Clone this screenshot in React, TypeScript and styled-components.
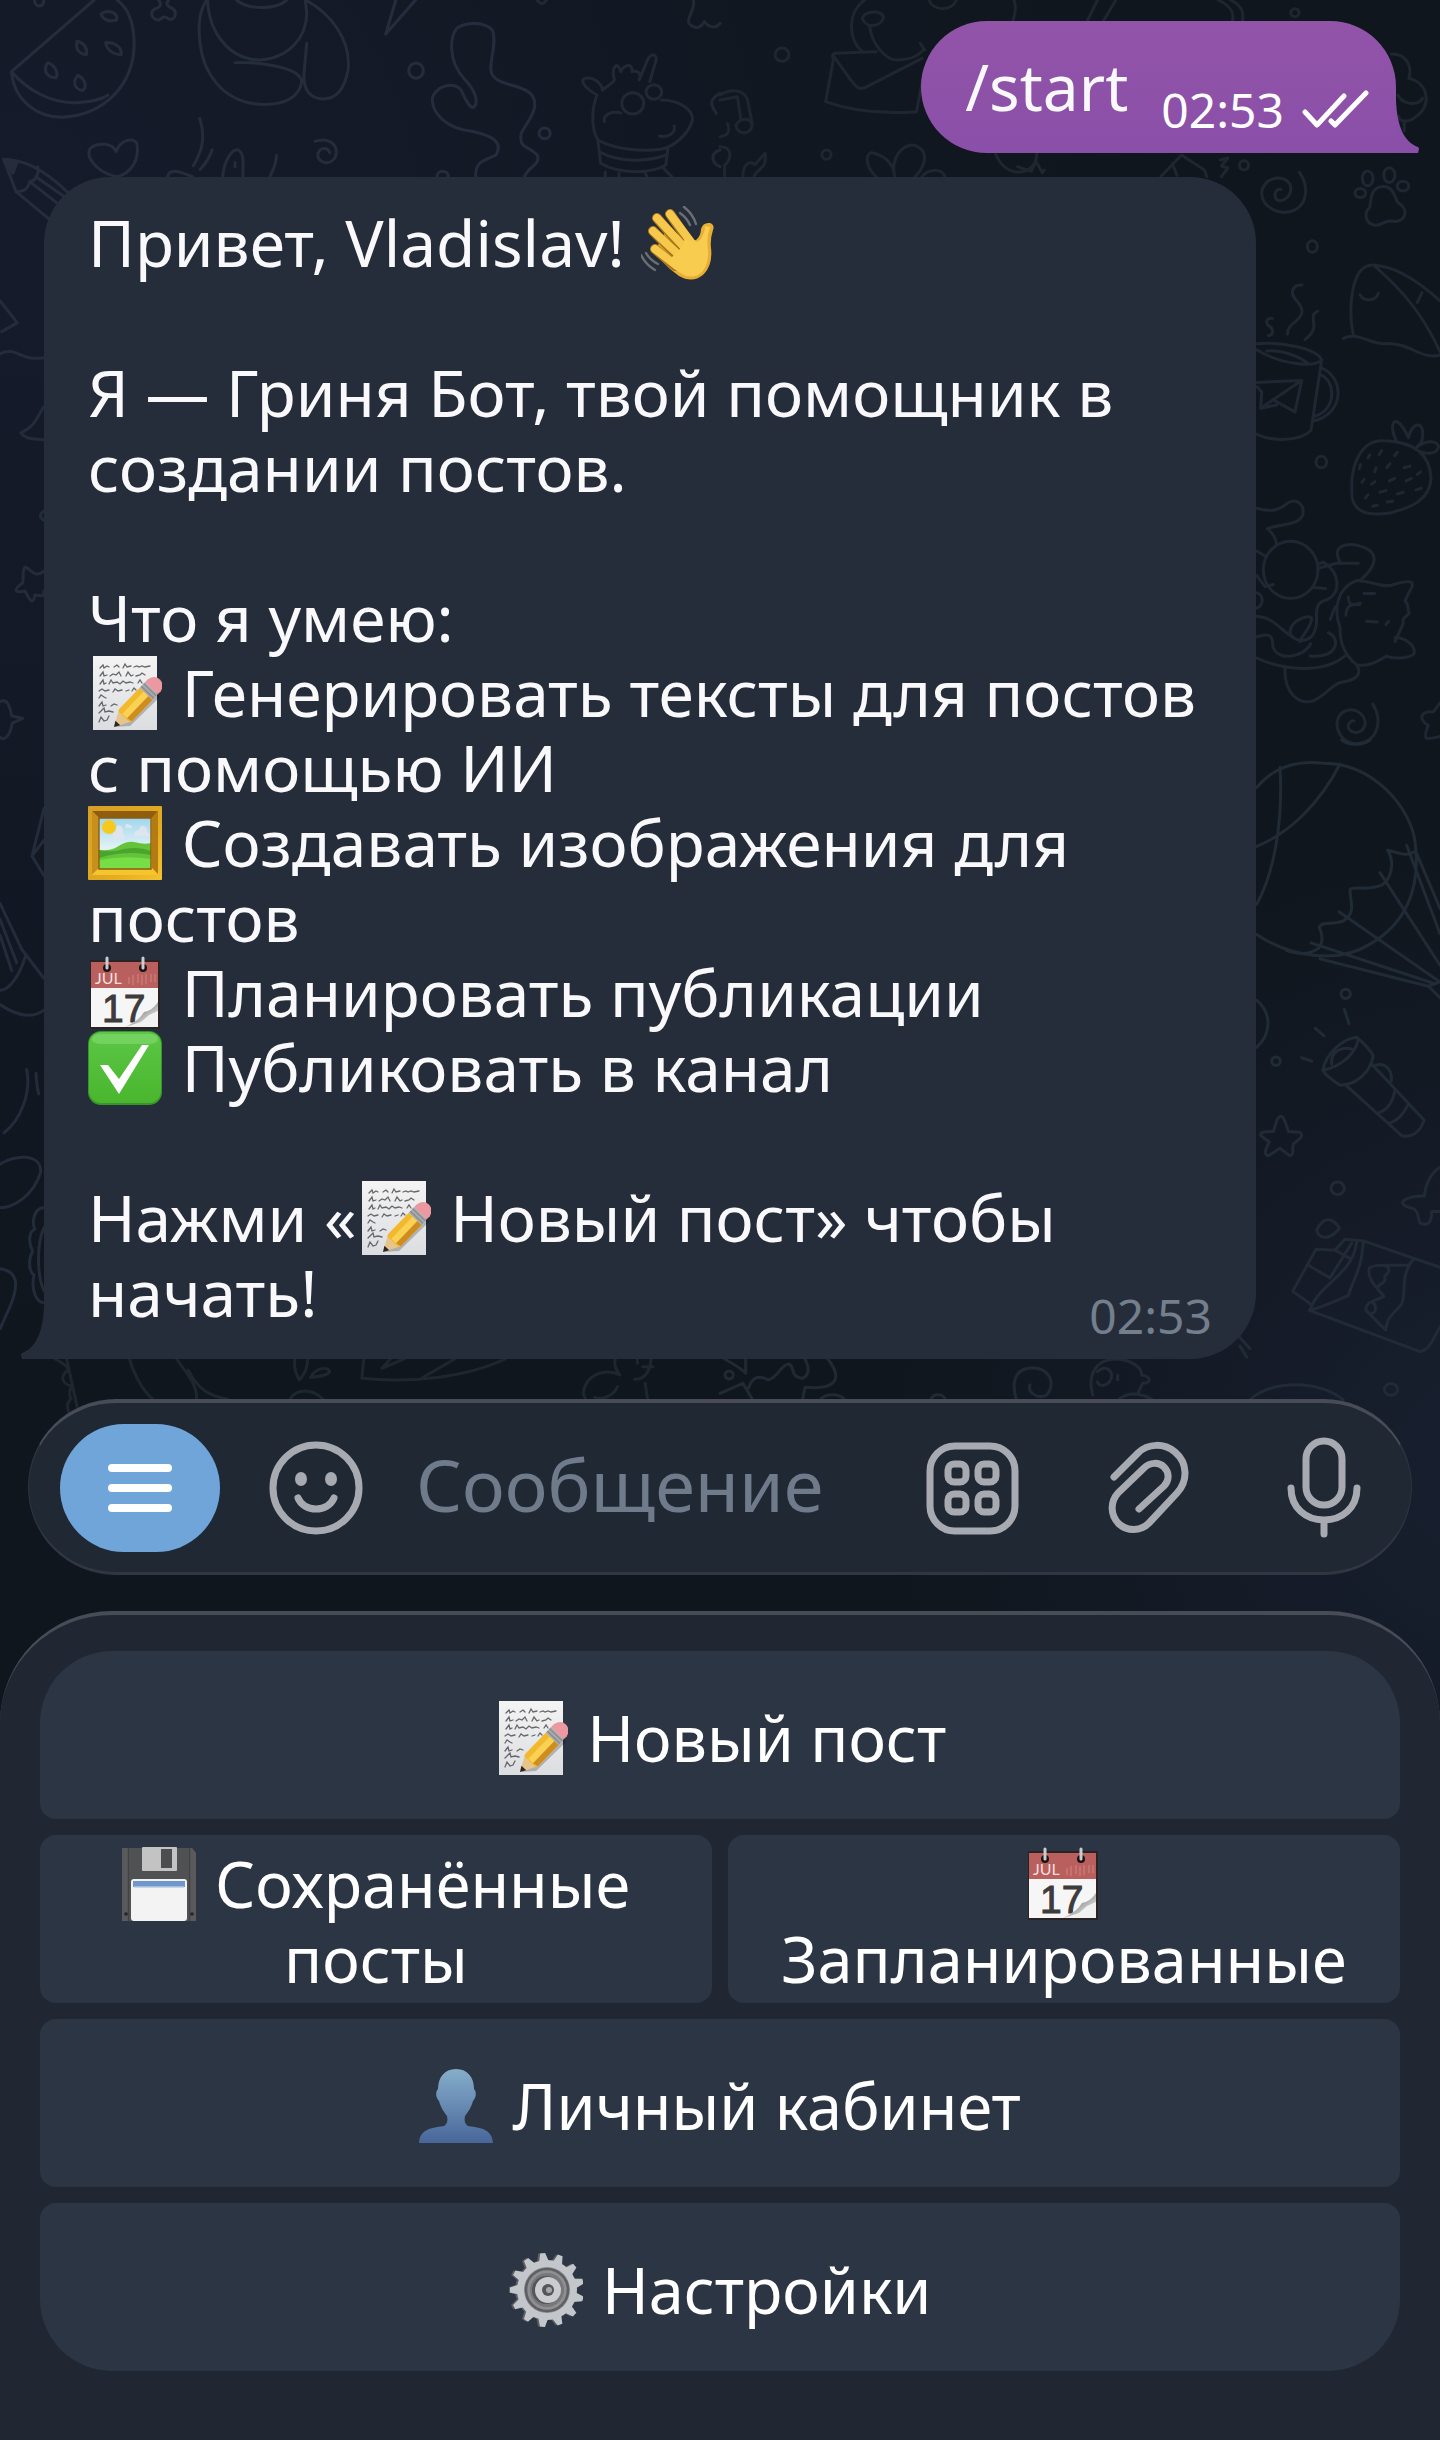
import React from 'react';
import styled, { createGlobalStyle } from 'styled-components';

const GlobalStyle = createGlobalStyle`
  * {
    box-sizing: border-box;
  }

  body {
    margin: 0;
    background: #0f151c;
    font-family: 'Noto Sans', sans-serif;
  }

  button,
  input {
    font-family: inherit;
  }
`;

const Page = styled.div`
  position: relative;
  isolation: isolate;
  display: flex;
  flex-direction: column;
  min-height: 100vh;
  overflow: hidden;
  background:
    radial-gradient(circle at 0% 10%, #151b2b 0%, rgba(21, 27, 43, 0) 44%),
    radial-gradient(circle at 104% 60%, #181f2f 0%, rgba(24, 31, 47, 0) 30%),
    #10161d;
`;

const WallpaperSvg = styled.svg`
  position: absolute;
  inset: 0;
  z-index: -1;
  width: 100%;
  height: 100%;
  fill: none;
  stroke-width: 3;
  stroke-linecap: round;
  stroke-linejoin: round;

  path,
  ellipse {
    vector-effect: non-scaling-stroke;
  }
`;

const SharedDefs = styled.svg`
  position: absolute;
  width: 0;
  height: 0;
`;

const Messages = styled.main`
  display: flex;
  flex-direction: column;
  gap: 24px;
  padding: 21px 44px 40px;
`;

const Bubble = styled.article<{ $own?: boolean }>`
  position: relative;
  padding: ${(props) => (props.$own ? '28px 26px 29px 44px' : '28px 44px 29px')};
  background: ${(props) =>
    props.$own ? 'linear-gradient(#9254a9, #8a4fa8)' : '#262d3a'};
  border-radius: ${(props) =>
    props.$own ? '70px 70px 0 70px' : '66px 66px 66px 0'};
  align-self: ${(props) => (props.$own ? 'flex-end' : 'stretch')};
  margin-right: ${(props) => (props.$own ? '0' : '140px')};
  color: #f9f9fb;
  font-size: 64px;
  line-height: 75px;
`;

const TailSvg = styled.svg<{ $own?: boolean }>`
  position: absolute;
  bottom: 0;
  width: 24px;
  height: 53px;
  ${(props) => (props.$own ? 'left: 100%;' : 'right: 100%; scale: -1 1;')}
  fill: ${(props) => (props.$own ? '#8a4fa8' : '#262d3a')};
`;

const Text = styled.p`
  margin: 0;
`;

const Paragraph = styled(Text)`
  margin-bottom: 75px;
`;

const LastRow = styled.div<{ $gap: number }>`
  display: flex;
  align-items: flex-end;
  justify-content: space-between;
  gap: ${(props) => props.$gap}px;
`;

const Meta = styled.div<{ $own?: boolean }>`
  display: flex;
  align-items: center;
  gap: 18px;
  margin-bottom: -18px;
  color: ${(props) => (props.$own ? '#fff' : '#737f8d')};
  font-size: 48px;
  line-height: 64px;
`;

const EmojiSvg = styled.svg`
  width: 74px;
  height: 74px;
  margin: -10px 3px -10px 0;
  vertical-align: -3px;
`;

const Composer = styled.form`
  display: flex;
  align-items: center;
  height: 176px;
  margin: 0 28px 36px;
  padding: 0 39px 0 31px;
  border-style: solid;
  border-width: 4px 1px 3px;
  border-color: #474c57 #2d343f #303743;
  border-radius: 88px;
  background: #202833;
`;

const MenuButton = styled.button`
  display: flex;
  align-items: center;
  justify-content: center;
  flex: none;
  width: 160px;
  height: 128px;
  margin-right: 48px;
  padding: 0;
  border: 0;
  border-radius: 64px;
  background: #70a5da;
`;

const IconButton = styled.button`
  flex: none;
  width: 96px;
  height: 96px;
  padding: 0;
  border: 0;
  background: none;
`;

const LineIcon = styled.svg`
  display: block;
  overflow: visible;
  fill: none;
  stroke: #a8aab2;
  stroke-width: 7;
  stroke-linecap: round;
  stroke-linejoin: round;
`;

const MessageInput = styled.input`
  flex: 1;
  min-width: 0;
  height: 112px;
  margin-left: 52px;
  padding: 0 0 8px;
  border: 0;
  outline: 0;
  background: none;
  color: #f9f9fb;
  font-size: 72px;

  &::placeholder {
    color: #6f7b8a;
    opacity: 1;
  }
`;

const Tools = styled.div`
  display: flex;
  gap: 80px;
`;

const Keyboard = styled.section`
  display: grid;
  flex: 1;
  grid-template-columns: 1fr 1fr;
  align-content: start;
  gap: 16px;
  padding: 36px 40px 69px;
  border-top: 4px solid #474c57;
  border-radius: 112px 112px 0 0;
  background: #202733;
`;

const Key = styled.button<{ $wide?: boolean; $edge?: 'top' | 'bottom' }>`
  grid-column: ${(props) => (props.$wide ? 'span 2' : 'auto')};
  min-height: 168px;
  padding: 11px 16px 7px;
  border: 0;
  border-radius: ${(props) =>
    props.$edge === 'top'
      ? '72px 72px 16px 16px'
      : props.$edge === 'bottom'
        ? '16px 16px 72px 72px'
        : '16px'};
  background: #2c3543;
  color: #fff;
  font-size: 63px;
  line-height: 75px;
`;

const Memo = () => (
  <EmojiSvg viewBox="0 0 74 74" role="img" aria-label="Заметка">
    <rect x="5" y="0" width="64" height="74" fill="url(#paper)" />
    <g fill="none" stroke="#66676b" strokeWidth="1.3" strokeLinecap="round">
      <path d="M12 12l3-3 1 3 3-2 2 1M26 11l3-2 2 2M35 12l2-4 2 3 4-1M46 11l3-1 2 1 3-1 3 1 5-1" />
      <path d="M12 20l3-4 1 4 3-1M22 20l3-2 3 1 3-3 2 4M38 20l2-4 3 4 2-1M48 20l4-1 2-2 3 2" />
      <path d="M12 28l3-4 1 4 2-1M21 28l2-4 2 3 4-1 3 2 3-3 3 2 4-1 3 1M50 27l2-3 2 3" />
      <path d="M11 35l3-2 3 2 4-1M25 36l2-3 3 2 4-1M38 35l3-1M44 35l2-3 2 2" />
      <path d="M11 42l2-3 3 2 2 1M11 50l3-4 1 4 3-1M23 50l3-2 3 1" />
      <path d="M11 57l3-3 2-2 1 4 4-1 4 1M11 66l2-5 3 4 3-1 2-4" />
    </g>
    <path d="M26 71l13-5 30-30 3 5-30 29z" fill="#000" opacity=".22" />
    <g transform="translate(26 71) rotate(-46) scale(1.1)">
      <path d="M0 0l15-8v16z" fill="#e8c48d" />
      <path d="M0 0l5-3v6z" fill="#2b2622" />
      <path d="M13-7l2-1h27v16H15l-2-1z" fill="#f2b92b" />
      <path d="M14-3h28v6H14z" fill="#f9d155" />
      <path d="M14 3h28v5H15z" fill="#cf8d1e" />
      <path d="M42-8h7V8h-7z" fill="#a7a9ad" />
      <path d="M44-8v16M47-8v16" stroke="#858789" />
      <path d="M49-8h4q7 2 7 8t-7 8h-4z" fill="#ec98a0" />
    </g>
  </EmojiSvg>
);

const Picture = () => (
  <EmojiSvg viewBox="0 0 74 74" role="img" aria-label="Картина">
    <rect width="74" height="74" rx="1" fill="url(#gold)" />
    <path d="M4 5h66l-6 7H11z" fill="#8f5d0c" />
    <path d="M4 5l7 7v50l-7 6z" fill="#c98f1c" />
    <path d="M70 5l-6 7v50l6 6z" fill="#b37b12" />
    <path d="M4 69l7-7h53l6 7z" fill="#f6c42d" />
    <rect x="11" y="12" width="52" height="51" fill="url(#sky)" />
    <circle cx="21" cy="21" r="7" fill="#f7c91d" />
    <g fill="#dfe5ee">
      <path d="M25 33q-2-6 3-8 0-7 5-5 3 4 2 7 3 3 0 6z" />
      <path d="M46 30q0-6 5-6 1-5 5-4 4 2 3 6 4 2 3 4z" />
      <path d="M37 20q2-4 4-1 4 0 3 3h-6z" />
    </g>
    <path d="M11 44q11 1 18-3 9-6 17-5 10 3 17 1v26H11z" fill="#63c33a" />
    <path d="M11 44q13 3 25-1 15-3 27 2v4q-26-5-52 3z" fill="#4aa52d" />
    <path d="M11 54q26-5 52-1v10H11z" fill="#77df45" />
    <path d="M11 12h52v51H11z" fill="none" stroke="#8a5d12" strokeWidth="1.4" />
  </EmojiSvg>
);

const Calendar = () => (
  <EmojiSvg viewBox="0 0 74 74" role="img" aria-label="Календарь">
    <rect x="2" y="4" width="70" height="69" rx="1" fill="#2b2223" />
    <rect x="3" y="6" width="67" height="27" fill="#b9605f" />
    <rect x="3" y="32" width="67" height="39" fill="#f7f6f6" />
    <g stroke="#d08684" strokeWidth="1">
      <path d="M41 21v7M45 19v10M50 18v9M54 19v10M58 18v10M63 18v8M67 18v8" />
    </g>
    <text x="7" y="28" fill="#f3dfdf" fontFamily="Lato, sans-serif" fontSize="16">
      JUL
    </text>
    <text
      x="14"
      y="66"
      fill="#3d3b3b"
      stroke="#3d3b3b"
      fontFamily="'Liberation Sans', sans-serif"
      fontSize="39"
    >
      17
    </text>
    <path d="M70 46q-6 9-14 10-5 9-19 15h33z" fill="#f1f1f1" />
    <path d="M70 46q-6 9-14 10-5 9-19 15l16-5 8-7 9-4z" fill="url(#curl)" />
    <circle cx="19" cy="12" r="4" fill="#1b1313" />
    <circle cx="55" cy="12" r="4" fill="#1b1313" />
    <path d="M19 2v10M55 2v10" stroke="#c9cdd0" strokeWidth="3" strokeLinecap="round" />
  </EmojiSvg>
);

const CheckMark = () => (
  <EmojiSvg viewBox="0 0 74 74" role="img" aria-label="Готово">
    <rect width="74" height="74" rx="13" fill="#37962a" />
    <rect x="1" y="1" width="72" height="71" rx="12" fill="url(#green)" />
    <rect x="4" y="3" width="66" height="10" rx="8" fill="#8ee07a" opacity=".5" />
    <path d="M12 34h8l11 14 23-34h7L31 63z" fill="#fff" />
  </EmojiSvg>
);

const WavingHand = () => (
  <EmojiSvg viewBox="0 0 74 74" role="img" aria-label="Привет">
    <path
      d="M39 7q7 5 10 12M43 1q9 7 12 17M5 47q4 7 12 11M0 49q5 10 14 15"
      fill="none"
      stroke="#6b6f74"
      strokeWidth="2.4"
      strokeLinecap="round"
    />
    <path
      d="M42 29q8 6 13 5 5-4 5-11 2-7 9-6 5 2 3 7-3 9-2 18 2 16-7 26-11 10-25 2-10-7-18-16l-4-13 8-14z"
      fill="#e9af35"
    />
    <g fill="none" strokeLinecap="round">
      <path d="M14 43l20 17M12 25l25 25M16 12l26 30M29 8l22 32" stroke="#a8761a" strokeWidth="10" />
      <path d="M14 43l22 17M12 25l27 25M16 12l28 30M29 8l24 32" stroke="#f6c94c" strokeWidth="8" />
    </g>
    <path d="M44 32q9 7 15 2 5-7 5-14l5 1q-4 12-2 23 1 14-6 22-9 8-20 2-10-6-14-13l14-14z" fill="#f8cc4f" />
  </EmojiSvg>
);

const Floppy = () => (
  <EmojiSvg viewBox="0 0 74 74" role="img" aria-label="Дискета">
    <path d="M0 1h70l4 5v68H0z" fill="#505153" />
    <path d="M6 1v73M68 1v73" stroke="#3c3d3f" strokeWidth="1.4" />
    <path d="M0 1h6v73H0zM68 1h2l4 5v68h-6z" fill="#626365" opacity=".55" />
    <rect x="20" y="0" width="35" height="24" rx="1" fill="#c3c3c3" />
    <rect x="39" y="2" width="11" height="19" fill="#4c4d4f" />
    <rect x="9" y="32" width="56" height="42" rx="3" fill="#f3f3f4" />
    <rect x="11" y="34" width="52" height="6" fill="#6f97cb" />
    <path d="M12 40h50" stroke="#b7cbe5" strokeWidth="1.4" />
    <circle cx="4" cy="67" r="1.8" fill="#232425" />
    <circle cx="70" cy="67" r="1.8" fill="#232425" />
  </EmojiSvg>
);

const Bust = () => (
  <EmojiSvg viewBox="0 0 74 74" role="img" aria-label="Профиль">
    <path
      d="M37 0c12 0 18 9 18 20 3 3 2 9-1 12-2 7-5 11-8 15-1 5 0 8 3 10 15 2 24 4 25 17H0c1-13 10-15 25-17 3-2 4-5 3-10-3-4-6-8-8-15-3-3-4-9-1-12C19 9 25 0 37 0z"
      fill="url(#bust)"
    />
  </EmojiSvg>
);

const TEETH = Array.from({ length: 13 }, (_, i) => (i * 360) / 13 - 6);

const Gear = () => (
  <EmojiSvg viewBox="0 0 74 74" role="img" aria-label="Шестерёнка">
    {['#5d5e60', '#c3c6cb'].map((color, layer) => (
      <g key={color} fill={color} transform={`translate(${layer ? 38 : 36} 37)`}>
        <circle r="30" />
        {TEETH.map((angle) => (
          <path key={angle} d="M-5-28l2-9h5l3 9z" transform={`rotate(${angle})`} />
        ))}
      </g>
    ))}
    <circle cx="38" cy="37" r="23" fill="#8d8f92" />
    <circle cx="38" cy="37" r="21" fill="none" stroke="#5f6063" strokeWidth="2.6" />
    <circle cx="38" cy="37" r="17" fill="#77787b" />
    <circle cx="37" cy="37" r="14" fill="#55565a" />
    <circle cx="39" cy="37" r="13" fill="#c9ccd0" />
    <circle cx="39" cy="37" r="6" fill="#54565a" />
    <circle cx="40" cy="37" r="3" fill="#a5a7ab" />
  </EmojiSvg>
);

const EmojiGradients = () => (
  <SharedDefs aria-hidden="true">
    <defs>
      <linearGradient id="paper" x1="0" y1="0" x2="0" y2="1">
        <stop offset="0" stopColor="#f4f4f4" />
        <stop offset="1" stopColor="#dcdde0" />
      </linearGradient>
      <linearGradient id="gold" x1="0" y1="0" x2="1" y2="1">
        <stop offset="0" stopColor="#d69f26" />
        <stop offset="0.6" stopColor="#e2aa20" />
        <stop offset="1" stopColor="#f3c32c" />
      </linearGradient>
      <linearGradient id="sky" x1="0" y1="0" x2="0" y2="1">
        <stop offset="0" stopColor="#9fd6ee" />
        <stop offset="0.6" stopColor="#e3f3f4" />
      </linearGradient>
      <linearGradient id="green" x1="0" y1="0" x2="0" y2="1">
        <stop offset="0" stopColor="#5cc746" />
        <stop offset="1" stopColor="#4ab52d" />
      </linearGradient>
      <linearGradient id="bust" x1="0" y1="0" x2="0" y2="1">
        <stop offset="0" stopColor="#86aecb" />
        <stop offset="1" stopColor="#48669a" />
      </linearGradient>
      <linearGradient id="curl" x1="0" y1="0" x2="1" y2="1">
        <stop offset="0.3" stopColor="#7d7d7d" />
        <stop offset="0.8" stopColor="#e4e4e4" />
      </linearGradient>
    </defs>
  </SharedDefs>
);

// Each group of doodles keeps its own grid, scaled onto the page.
const Wallpaper = () => (
  <WallpaperSvg viewBox="0 0 1440 2440" preserveAspectRatio="xMidYMin slice" aria-hidden="true">
    <g stroke="#252d3d" transform="scale(.4592 .3333)">
      <path d="M205 0L25 215C30 300 80 352 135 352 230 345 295 250 292 120 290 60 275 20 255 0M25 215C60 270 110 310 165 308 200 305 220 300 235 285" />
      <path d="M220 42c10-14 38-8 34 18-16 6-30 0-34-18zM168 124c14 4 24 22 20 40-18-2-24-20-20-40zM230 128c20-2 36 14 34 36-18 0-32-16-34-36zM104 188c16 8 24 30 18 46-20-2-30-22-18-46zM170 226c16 12 20 34 10 46-20-6-22-28-10-46z" />
      <path d="M345 0c8 12 4 22-6 26-14 8-10 34 8 34 8-12 14-12 22-2 14 2 18-26 4-34-10-6-12-14-6-24M75 0c0 24 22 24 20 0" />
      <path d="M435 120C430 60 440 20 450 0M452 0C455 100 500 178 565 180 630 175 668 110 668 40L665 0M515 0C540 30 600 30 625 0M512 188C560 185 655 200 657 245 650 300 610 315 565 313 480 305 440 210 435 120M665 0C720 40 765 120 758 210 750 270 730 297 703 297 675 295 660 270 662 220L668 130" />
      <path d="M255 530C215 520 185 475 196 445 215 425 245 430 253 455 262 420 290 410 298 430 305 480 285 520 255 530z" />
      <path d="M8 478C50 480 90 500 150 580M8 478L35 575 105 655M35 575C50 575 60 570 65 545 80 540 85 520 82 500M65 545L125 610M78 530L140 590" />
      <path d="M8 478L38 485 28 520z" fill="#252d3d" />
      <path d="M435 355c14 60 4 100-14 142M462 450c-8 32-18 46-26 58M365 530c4-28 30-14 54 0M485 530c4-60 24-84 34-80 14 10 10 50 10 80M602 466c0 28-8 44-14 64M512 488v12" />
      <path d="M686 424c30-14 50 10 46 40-6 34-40 30-40 0 2-20 20-26 26-6" />
      <path d="M862 0L840 102 905 0" />
      <ellipse cx="906" cy="212" rx="16" ry="23" />
      <ellipse cx="1186" cy="400" rx="12" ry="16" />
      <ellipse cx="964" cy="528" rx="12" ry="14" />
      <path d="M1036 530C1034 480 1060 480 1080 465 1100 420 1060 400 1010 390 950 370 935 310 944 285 960 250 990 250 1003 268 1015 300 1020 320 1030 323 1045 310 1035 270 1010 235 975 180 980 110 995 85 1015 65 1055 65 1072 90 1085 130 1060 200 1072 225 1090 260 1130 250 1155 280 1180 320 1150 360 1135 400 1130 450 1150 435 1170 465 1178 495 1150 500 1142 530" />
    </g>
    <g stroke="#212934" transform="scale(.4592 .3333)">
      <path d="M1302 420C1285 380 1290 320 1300 285 1280 270 1265 250 1270 238 1290 225 1310 250 1312 270 1325 255 1335 250 1338 240 1330 200 1345 180 1352 215 1360 190 1380 190 1376 215 1390 210 1398 220 1392 240L1410 180C1420 155 1432 165 1428 185L1415 245M1440 300C1480 300 1510 330 1508 360 1500 400 1470 440 1440 448 1400 455 1340 450 1302 420M1302 420L1308 490C1350 525 1420 520 1450 495L1455 440M1305 455C1350 490 1410 485 1452 465M1316 365c-4-24 20-32 36-26M1436 408c20 6 36-10 32-30M1318 516v14M1348 520v10M1405 520l4 10M1445 505l18 25" />
      <ellipse cx="1378" cy="310" rx="24" ry="32" />
      <ellipse cx="1424" cy="276" rx="17" ry="22" />
      <path d="M1510 0C1515 30 1495 50 1500 70 1515 90 1525 85 1534 65 1545 85 1560 85 1568 70M1568 280C1545 300 1545 310 1560 340M1568 450C1545 460 1550 490 1568 500M1170 0c6 14 14 14 20 0" />
    </g>
    <g stroke="#1e2630" transform="translate(720 0) scale(.4592 .3333)">
      <path d="M315 0C275 40 280 120 310 155M455 0C465 35 505 35 515 0M640 0C648 30 640 50 638 62M326 80C330 130 360 180 385 180 420 180 440 160 444 145M310 55c6-26 44-24 46-4-4 32-40 34-46 4zM436 130l10 20M800 62L822 0M835 62L862 0M1085 0C1115 20 1120 40 1116 62M1112 0C1140 20 1140 40 1138 62" />
      <path d="M250 160L340 155M440 175L320 260C300 275 295 255 285 240L248 170 230 305C300 340 380 340 428 335L445 210M250 160q-8 6-4 14" />
      <path d="M0 285C30 260 55 275 60 300L70 370C70 410 35 405 35 375 45 350 65 355 68 370M0 300L38 290 45 355M0 410c20-4 22-20 16-40M0 440c30 0 24 40 10 56v34M50 530c0-40 16-50 26-36l22-34c6 50-20 46-24 70" />
      <path d="M340 530C310 490 320 450 335 460 365 470 380 500 380 530 370 460 410 420 430 440 460 460 440 510 425 530M440 530C450 510 480 500 490 530M600 460C620 540 690 530 690 460M960 530L1005 465 1055 510 1060 530M985 490l10 36M648 500l30 14 10-30 14 34 4-8M1090 480l16-6-14 24 14 6-14 26" />
      <ellipse cx="135" cy="164" rx="15" ry="20" />
      <ellipse cx="232" cy="464" rx="10" ry="14" />
      <ellipse cx="1141" cy="496" rx="10" ry="14" />
      <ellipse cx="1252" cy="38" rx="9" ry="12" />
      <path d="M1462 162C1495 160 1508 200 1500 235 1545 250 1550 320 1515 350 1500 370 1480 365 1478 350M1476 285c10 30 44 34 54 10M1490 370v22" />
    </g>
    <g stroke="#1e2732" transform="translate(1240 160) scale(.3333 .4082)">
      <path d="M178 30C205 60 205 105 165 122 120 140 65 115 65 80 68 45 130 30 150 60 165 95 105 115 105 85 105 75 115 70 123 72" />
      <path d="M430 65C465 65 465 100 475 105 510 120 495 155 460 150 435 145 430 160 405 160 370 155 375 125 388 118 395 110 385 65 430 65z" />
      <ellipse cx="383" cy="45" rx="16" ry="18" />
      <ellipse cx="448" cy="37" rx="17" ry="18" />
      <ellipse cx="489" cy="64" rx="17" ry="12" />
      <ellipse cx="361" cy="81" rx="16" ry="11" />
      <ellipse cx="217" cy="212" rx="15" ry="14" />
      <ellipse cx="244" cy="740" rx="16" ry="14" />
      <path d="M340 428C325 370 330 255 400 257 460 300 540 360 600 470M400 257C470 260 540 300 600 345M310 437C350 420 390 450 430 450 510 445 540 490 600 478M360 330c10 18 48 16 55-4M546 325l-14 24" />
      <path d="M142 427c2-30 40-30 44-55 0-25-35-32-28-52 6-14 16-14 28-14M195 440c20-12 30-24 26-40-2-18-4-24 12-30M85 430c20-2 14-20 0-24-10-10-4-20 12-18" />
      <path d="M50 450C120 445 230 460 245 490 220 510 120 500 50 465M80 468C120 465 180 480 205 500M245 490L213 662C180 690 100 690 50 672M245 510C310 530 320 620 218 640M240 525C290 540 290 615 222 628M50 545L185 540 165 617 105 590M185 540L62 608 65 568 50 555M62 608L110 600" />
      <path d="M430 688C370 685 325 740 337 830 350 870 400 870 450 865 520 850 570 830 573 780 570 720 520 690 430 688zM470 690C440 640 470 615 505 680 520 635 560 640 545 690L525 708C560 680 600 690 595 705 585 725 550 720 525 708" />
      <path d="M390 722l-6 8M425 712l-8 10M472 716l-8 8M362 746l-4 10M408 754l-4 10M450 744l-10 10M510 750l-18 4M372 782l-6 8M405 788l-10 6M464 780l-16 6M514 780l-16 6M542 764l-10 6M384 820l-8 8M438 810l-18 4M490 814l-18 4M544 804l-16 4M412 846l-14 2M458 836l-16 2" />
      <path d="M50 853C100 865 120 855 140 842 170 825 195 845 188 870 175 895 130 890 82 903 100 915 108 930 110 942M235 990L250 985C300 1010 305 1060 260 1078 210 1085 240 1130 225 1150 215 1190 150 1180 150 1155 155 1125 215 1110 215 1125 210 1150 180 1170 180 1180M235 1000L290 988H355M220 1047L257 1050M300 985C270 940 330 935 375 950 430 970 390 1010 360 1030M50 958L75 970M50 1018L75 1045 100 1040M50 1060c20 6 24 28 0 38" />
      <ellipse cx="152" cy="1004" rx="82" ry="70" />
      <path d="M300 1145C280 1100 290 1050 350 1030 390 1030 430 1050 460 1040 520 1025 525 1035 510 1055L495 1080C510 1090 500 1100 508 1110 495 1120 485 1125 490 1135L465 1180M465 1170C500 1170 530 1195 522 1210 500 1225 450 1220 440 1215 400 1235 380 1240 350 1237 310 1210 300 1180 300 1145M325 1070c0 20 12 22 36 16M318 1115c0-20 14-30 42-26M372 1062h32M380 1130l32 2M446 1130l-8 8M285 1095l-14 30" />
      <path d="M50 1118C100 1120 120 1150 160 1170M50 1168C80 1160 100 1160 98 1190 110 1230 190 1220 212 1185M50 1220C130 1250 250 1260 315 1215M265 1158C300 1170 300 1220 210 1215M135 1240C130 1310 180 1335 220 1325 260 1310 270 1290 300 1280 350 1275 365 1260 352 1240" />
      <path d="M398 1333C430 1370 415 1430 345 1430 290 1425 275 1370 310 1352 350 1335 380 1365 375 1385 360 1415 320 1400 325 1385 330 1375 335 1372 342 1374M600 1330L580 1352C540 1350 535 1370 565 1385 545 1425 560 1420 600 1412" />
    </g>
    <g stroke="#202b36" transform="translate(1240 740) scale(.3333 .4209)">
      <path d="M50 113C110 55 190 50 250 55 400 55 510 160 525 240 545 360 490 440 390 485 300 530 160 520 50 462M120 65C130 200 100 320 50 390M50 253C150 220 240 150 300 57M525 265C495 280 470 265 443 262 465 290 455 330 425 345 380 360 345 345 330 355 330 385 350 410 310 430 275 440 245 430 238 445 250 465 250 480 235 495 200 515 160 505 140 500M500 250L600 460M530 270L600 400M420 315L600 535M297 408L600 575M213 482L580 578M240 520L565 585 600 612M565 585L600 575" />
      <path d="M305 0C330 15 370 12 390 0M50 618c50 34 40 84 0 112M313 640l14 34M226 685l26 18M185 755l30 8" />
      <ellipse cx="317" cy="603" rx="14" ry="11" />
      <ellipse cx="108" cy="763" rx="13" ry="10" />
      <ellipse cx="293" cy="1065" rx="20" ry="15" />
      <ellipse cx="453" cy="1543" rx="20" ry="14" />
      <path d="M248 785C260 740 310 710 350 706 370 720 390 735 400 750 390 790 350 820 300 820 280 810 260 800 248 785C310 775 350 740 355 710M275 770c-4-30 30-42 60-36M395 770L552 903C540 935 510 945 485 940L320 822M408 772c30-6 50 14 46 38M465 830C460 860 440 880 418 885M505 865C490 890 470 905 450 910" />
      <path d="M115 898C125 888 132 895 145 930L180 932C190 940 185 945 160 960 155 970 165 985 150 988L120 970 85 988C65 985 85 960 88 955L62 940C60 930 75 930 100 930 105 920 108 905 115 898z" />
      <path d="M600 1015C570 1030 555 1060 553 1083 490 1085 470 1100 505 1110 540 1115 530 1130 540 1148 560 1155 575 1150 575 1120H600M230 1165C250 1130 280 1135 298 1160 275 1185 240 1190 230 1165z" />
      <path d="M370 1190L600 1253M228 1210L158 1310 215 1342M228 1210L285 1212 315 1186 370 1190C365 1260 340 1280 325 1320 280 1335 240 1350 208 1355L540 1453C570 1450 580 1420 600 1395M205 1248L270 1278 335 1195M285 1212L330 1232M350 1192C340 1270 240 1290 212 1350M388 1255C400 1245 440 1248 505 1248L520 1235C480 1270 500 1310 485 1340 460 1365 440 1370 437 1402L378 1355C375 1335 400 1335 432 1322 410 1300 380 1280 388 1255M440 1250c16 10 0 20-6 24 6 20-16 14-22 28M395 1335c16 6 16 30-4 28" />
      <path d="M0 1420l30 26M0 1440l20 26M30 1568C90 1520 240 1520 310 1568" />
    </g>
    <g stroke="#232c3b" transform="translate(0 160) scale(.3333 .7908)">
      <path d="M0 178L52 206 5 217M0 245C50 235 60 255 132 250M132 312C110 325 105 338 62 345 80 355 110 352 132 354M132 444q-22 6 0 12M132 520C100 530 90 515 75 515 65 520 72 530 68 535 40 543 42 548 75 545 95 562 100 560 105 550 125 550 132 555 132 545M0 685C20 680 30 690 35 703L68 706 37 712C30 730 10 735 0 730M132 820L96 880 132 905M96 880L132 860M0 940L65 998 132 1035M0 1068C60 1085 100 1085 132 1075M0 1050C30 1050 60 1030 78 1005M0 960L50 1015M0 980L35 1025M80 1150C95 1180 60 1215 12 1230M108 1155q2 16 8 26M0 1270C40 1258 125 1255 122 1280 100 1310 40 1325 0 1325M0 1402C50 1405 60 1420 30 1450L0 1478M132 1325C100 1325 95 1345 105 1352 85 1355 85 1370 98 1380 85 1390 85 1405 102 1410 92 1430 110 1445 132 1445M132 1350C110 1370 110 1410 132 1430" />
    </g>
    <g stroke="#1e2630" transform="translate(0 1260) scale(.4592 .3333)">
      <path d="M120 297C140 310 150 325 148 330 130 350 135 370 155 378 150 400 150 410 155 415 145 430 145 440 150 455M145 297L168 440M282 297C290 340 310 390 332 417M385 297C400 330 430 370 428 417M410 330C430 390 460 410 495 417M642 297C640 320 645 345 652 360 665 340 670 320 670 297M676 352C690 320 715 320 718 335 710 350 690 350 676 352zM632 417C645 385 680 385 703 417M792 297L788 355C900 370 1020 350 1100 297M850 297L832 325 880 297M990 297L918 355M1340 297C1335 320 1345 335 1350 345M1388 297V310M1350 345C1320 325 1275 340 1270 400L1275 417M1345 380C1335 410 1310 420 1295 412M1418 297C1415 340 1400 360 1382 358M1405 370L1410 417M1400 320h22" />
    </g>
    <g stroke="#212a34" transform="translate(720 1260) scale(.4592 .3333)">
      <path d="M10 297C40 320 50 330 56 340V297M0 400L50 370 70 417M62 385C70 350 85 345 105 360 130 350 130 315 150 312 165 320 150 350 180 355 200 340 190 310 185 297M235 297C270 360 250 390 185 382L180 417M220 417C230 400 260 400 270 417M460 417C465 400 485 400 490 417M645 417C635 370 640 325 680 323 720 325 730 370 712 405 690 420 670 395 675 375M812 405C800 350 815 300 860 297 890 297 920 320 918 345 940 350 940 370 920 370L910 400M822 335c20-24 34 0 30 20-6 24-28 28-30 10M866 345v14M870 417C890 395 915 400 940 417" />
      <ellipse cx="20" cy="345" rx="9" ry="12" />
    </g>
  </WallpaperSvg>
);

const Tail = ({ own }: { own?: boolean }) => (
  <TailSvg $own={own} viewBox="0 0 24 53" aria-hidden="true">
    <path d="M0 0C1 26 8 42 22 47q1 1 1 2l-1 4H0z" />
  </TailSvg>
);

const ReadMark = () => (
  <svg width="68" height="40" viewBox="0 0 68 40" role="img" aria-label="Прочитано">
    <path
      d="M3 22l12 13L42 6M29 31l4 4L64 3"
      fill="none"
      stroke="#fff"
      strokeWidth="5"
      strokeLinecap="round"
      strokeLinejoin="round"
    />
  </svg>
);

const App: React.FC = () => (
  <Page>
    <GlobalStyle />
    <EmojiGradients />
    <Wallpaper />

    <Messages>
      <Bubble $own>
        <LastRow $gap={33}>
          <Text>/start</Text>
          <Meta $own>
            <time>02:53</time>
            <ReadMark />
          </Meta>
        </LastRow>
        <Tail own />
      </Bubble>

      <Bubble>
        <Paragraph>
          Привет, Vladislav! <WavingHand />
        </Paragraph>
        <Paragraph>Я — Гриня Бот, твой помощник в создании постов.</Paragraph>
        <Text>Что я умею:</Text>
        <Text>
          <Memo /> Генерировать тексты для постов с помощью ИИ
        </Text>
        <Text>
          <Picture /> Создавать изображения для постов
        </Text>
        <Text>
          <Calendar /> Планировать публикации
        </Text>
        <Paragraph>
          <CheckMark /> Публиковать в канал
        </Paragraph>
        <LastRow $gap={24}>
          <Text>
            Нажми «<Memo /> Новый пост» чтобы начать!
          </Text>
          <Meta>
            <time>02:53</time>
          </Meta>
        </LastRow>
        <Tail />
      </Bubble>
    </Messages>

    <Composer onSubmit={(event) => event.preventDefault()}>
      <MenuButton type="button" aria-label="Меню">
        <svg width="64" height="48" viewBox="0 0 64 48" stroke="#fff" strokeWidth="8" strokeLinecap="round">
          <path d="M4 4h56M4 24h56M4 44h56" />
        </svg>
      </MenuButton>
      <IconButton type="button" aria-label="Эмодзи">
        <LineIcon viewBox="0 0 96 96">
          <circle cx="48" cy="48" r="43" />
          <path d="M30 58c3 7 10 11 18 11s15-4 18-11" />
          <g fill="#a8aab2" stroke="none">
            <ellipse cx="33" cy="39" rx="6" ry="7" />
            <ellipse cx="63" cy="39" rx="6" ry="7" />
          </g>
        </LineIcon>
      </IconButton>
      <MessageInput type="text" placeholder="Сообщение" aria-label="Сообщение" />
      <Tools>
        <IconButton type="button" aria-label="Команды">
          <LineIcon viewBox="0 0 96 96">
            <rect x="6" y="6" width="85" height="85" rx="25" />
            <rect x="24" y="24" width="18" height="18" rx="6" />
            <rect x="54" y="24" width="18" height="18" rx="6" />
            <rect x="24" y="54" width="18" height="18" rx="6" />
            <rect x="54" y="54" width="18" height="18" rx="6" />
          </LineIcon>
        </IconButton>
        <IconButton type="button" aria-label="Прикрепить">
          <LineIcon viewBox="0 0 96 96">
            <path d="M14 37l24-24c10-10 26-10 37-1 13 11 13 29 2 41L49 83c-9 9-22 8-30 1-9-9-9-22-1-31l26-25c6-6 15-6 20-1 6 6 5 14 0 19L39 69" />
          </LineIcon>
        </IconButton>
        <IconButton type="button" aria-label="Голосовое сообщение">
          <LineIcon viewBox="0 0 96 96">
            <rect x="30" y="1" width="36" height="64" rx="18" />
            <path d="M15 48c0 20 15 32 33 32s33-12 33-32M48 80v14" />
          </LineIcon>
        </IconButton>
      </Tools>
    </Composer>

    <Keyboard aria-label="Клавиатура бота">
      <Key type="button" $wide $edge="top">
        <Memo /> Новый пост
      </Key>
      <Key type="button">
        <Floppy /> Сохранённые посты
      </Key>
      <Key type="button">
        <Calendar /> Запланированные
      </Key>
      <Key type="button" $wide>
        <Bust /> Личный кабинет
      </Key>
      <Key type="button" $wide $edge="bottom">
        <Gear /> Настройки
      </Key>
    </Keyboard>
  </Page>
);

export default App;
